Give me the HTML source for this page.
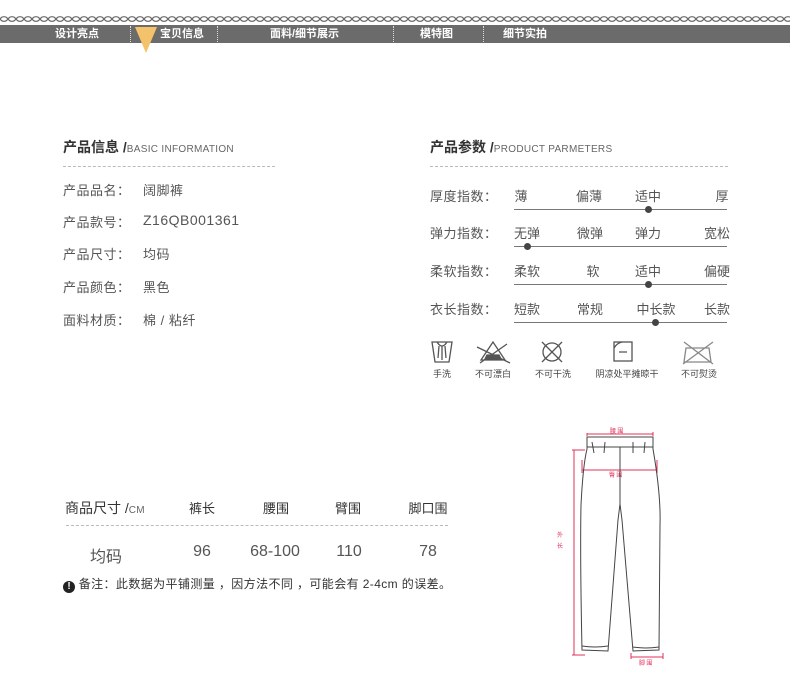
<!DOCTYPE html>
<html><head><meta charset="utf-8"><style>
body{margin:0;width:790px;height:677px;background:#fff;position:relative;overflow:hidden;font-family:"Liberation Sans","Noto Sans CJK SC",sans-serif;color:#555}
.a{position:absolute;white-space:nowrap}
.nav{color:#fff;font-size:11px;font-weight:bold;top:26px;line-height:16px}
.sep{position:absolute;top:26px;height:16px;border-left:1px dotted #ddd}
.h{font-size:14px;font-weight:bold;color:#333}
.h small{font-size:10px;font-weight:normal;color:#666;letter-spacing:.3px}
.dash{position:absolute;height:0;border-top:1px dashed #bbb}
.r{font-size:13px;color:#555;letter-spacing:.5px}
.o{font-size:13px;color:#555;position:absolute;transform:translateX(-50%)}
.ln{position:absolute;height:1px;background:#777;left:514px;width:213px}
.dot{position:absolute;width:7px;height:7px;border-radius:50%;background:#444}
.il{font-size:9px;color:#444;position:absolute;transform:translateX(-50%);top:367px}
.c{position:absolute;transform:translateX(-50%);font-size:13px;color:#333}
.v{position:absolute;transform:translateX(-50%);font-size:16px;color:#555;top:543px}
</style></head><body>
<svg class="a" style="left:0;top:14px" width="790" height="10"><defs><pattern id="ch" width="8" height="10" patternUnits="userSpaceOnUse"><ellipse cx="4" cy="5" rx="3.5" ry="2.3" fill="none" stroke="#666" stroke-width="1.2"/></pattern></defs><rect width="790" height="10" fill="url(#ch)"/></svg>
<div class="a" style="left:0;top:25px;width:790px;height:18px;background:#6b6b6b"></div>
<div class="a nav" style="left:55px">设计亮点</div>
<div class="a nav" style="left:160px">宝贝信息</div>
<div class="a nav" style="left:270px">面料/细节展示</div>
<div class="a nav" style="left:420px">模特图</div>
<div class="a nav" style="left:503px">细节实拍</div>
<div class="sep" style="left:130px"></div><div class="sep" style="left:217px"></div><div class="sep" style="left:393px"></div><div class="sep" style="left:483px"></div>
<svg class="a" style="left:135px;top:27px" width="22" height="26"><polygon points="0,0 22,0 11,26" fill="#f4c26b"/></svg>

<div class="a h" style="left:63px;top:137px">产品信息 /<small>BASIC INFORMATION</small></div>
<div class="dash" style="left:63px;top:166px;width:212px"></div>
<div class="a r" style="left:63px;top:180px">产品品名：</div><div class="a r" style="left:143px;top:180px">阔脚裤</div>
<div class="a r" style="left:63px;top:212px">产品款号：</div><div class="a r" style="left:143px;top:212px;font-size:14px">Z16QB001361</div>
<div class="a r" style="left:63px;top:244px">产品尺寸：</div><div class="a r" style="left:143px;top:244px">均码</div>
<div class="a r" style="left:63px;top:277px">产品颜色：</div><div class="a r" style="left:143px;top:277px">黑色</div>
<div class="a r" style="left:63px;top:310px">面料材质：</div><div class="a r" style="left:143px;top:310px">棉 / 粘纤</div>

<div class="a h" style="left:430px;top:137px">产品参数 /<small>PRODUCT PARMETERS</small></div>
<div class="dash" style="left:430px;top:166px;width:298px"></div>

<div class="a r" style="left:430px;top:186px">厚度指数：</div>
<div class="o" style="left:521px;top:186px">薄</div><div class="o" style="left:589px;top:186px">偏薄</div><div class="o" style="left:648px;top:186px">适中</div><div class="o" style="left:722px;top:186px">厚</div>
<div class="ln" style="top:209px"></div><div class="dot" style="left:645px;top:206px"></div>

<div class="a r" style="left:430px;top:223px">弹力指数：</div>
<div class="o" style="left:527px;top:223px">无弹</div><div class="o" style="left:590px;top:223px">微弹</div><div class="o" style="left:648px;top:223px">弹力</div><div class="o" style="left:717px;top:223px">宽松</div>
<div class="ln" style="top:246px"></div><div class="dot" style="left:524px;top:243px"></div>

<div class="a r" style="left:430px;top:261px">柔软指数：</div>
<div class="o" style="left:527px;top:261px">柔软</div><div class="o" style="left:593px;top:261px">软</div><div class="o" style="left:648px;top:261px">适中</div><div class="o" style="left:717px;top:261px">偏硬</div>
<div class="ln" style="top:284px"></div><div class="dot" style="left:645px;top:281px"></div>

<div class="a r" style="left:430px;top:299px">衣长指数：</div>
<div class="o" style="left:527px;top:299px">短款</div><div class="o" style="left:590px;top:299px">常规</div><div class="o" style="left:656px;top:299px">中长款</div><div class="o" style="left:717px;top:299px">长款</div>
<div class="ln" style="top:322px"></div><div class="dot" style="left:652px;top:319px"></div>

<svg class="a" style="left:425px;top:338px" width="310" height="28" fill="none" stroke="#555" stroke-width="1.3">
<path d="M7 4 L27 4 L24 24 L10 24 Z M12 4 Q17 12 22 4 M14 8 L13 20 M17 8 L17 22 M20 8 L21 20"/>
<path d="M68 4 L56 22 L80 22 Z M52 9 L85 25 M55 25 L82 6"/><path d="M62 17 L74 17 L76 21 L60 21 Z" fill="#555"/>
<circle cx="127" cy="14" r="9"/><path d="M117 4 L137 24 M137 4 L117 24"/>
<rect x="189" y="4" width="18" height="19"/><path d="M189 10 Q192 5 197 4 M194 14 L202 14"/>
<path d="M261 10 L284 10 L286 24 L259 24 Z M259 4 L288 26 M288 4 L258 26" stroke="#888"/>
</svg>
<div class="il" style="left:442px">手洗</div>
<div class="il" style="left:493px">不可漂白</div>
<div class="il" style="left:553px">不可干洗</div>
<div class="il" style="left:627px">阴凉处平摊晾干</div>
<div class="il" style="left:699px">不可熨烫</div>

<div class="a h" style="left:65px;top:498px;font-weight:normal;color:#333">商品尺寸 /<small>CM</small></div>
<div class="c" style="left:202px;top:498px">裤长</div>
<div class="c" style="left:276px;top:498px">腰围</div>
<div class="c" style="left:348px;top:498px">臂围</div>
<div class="c" style="left:428px;top:498px">脚口围</div>
<div class="dash" style="left:66px;top:525px;width:382px"></div>
<div class="v" style="left:106px">均码</div>
<div class="v" style="left:202px">96</div>
<div class="v" style="left:275px">68-100</div>
<div class="v" style="left:349px">110</div>
<div class="v" style="left:428px">78</div>
<div class="a" style="left:63px;top:575px;font-size:12px;color:#333;letter-spacing:.4px"><span style="display:inline-block;width:12px;height:12px;border-radius:50%;background:#222;color:#fff;font-size:10px;text-align:center;line-height:12px;font-weight:bold;vertical-align:-1px;letter-spacing:0">!</span> 备注：此数据为平铺测量 ，因方法不同 ，可能会有 2-4cm 的误差。</div>

<svg class="a" style="left:545px;top:425px" width="130" height="245" font-family="Noto Sans CJK SC,sans-serif">
<g stroke="#e0305a" stroke-width="1" fill="none">
<path d="M42 8 L42 11 M42 9 L108 9 M108 7 L108 11"/>
<path d="M37 35 L37 48 M37 45 L112 45 M112 35 L112 48"/>
<path d="M27 25 L40 25 M29 25 L29 230 M27 230 L40 230"/>
<path d="M86 228 L86 234 M86 232 L118 232 M118 228 L118 234"/>
</g>
<g fill="#e0305a" font-size="6"><text x="65" y="8">腰 围</text><text x="64" y="52">臀 围</text><text x="12" y="112">外</text><text x="12" y="123">长</text><text x="94" y="240">脚 围</text></g>
<g stroke="#444" stroke-width="1" fill="none">
<path d="M42 12 L108 12 L108 24 Q116 70 115 100 L114 225 L88 226 L77 95 L75 79 L73 95 L63 226 L37 225 Q35 130 36 80 Q38 40 42 24 Z"/>
<path d="M42 22 L108 22 M75 22 L75 79"/>
<path d="M47 17 L49 28 M60 17 L59 28 M88 17 L88 28 M100 17 L99 28"/>
<path d="M37 221 Q50 223 63 221 M88 222 Q100 224 114 222"/>
</g></svg>
</body></html>
